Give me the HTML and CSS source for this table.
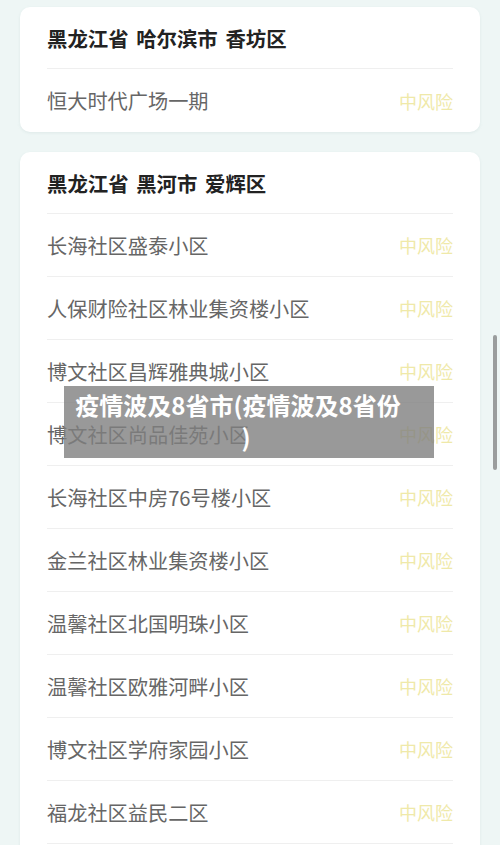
FILE: index.html
```html
<!DOCTYPE html>
<html lang="zh-CN">
<head>
<meta charset="utf-8">
<title>风险地区</title>
<link rel="stylesheet" href="styles.css">
</head>
<body>
<main class="page">
  <section class="card">
    <h2 class="card-title">黑龙江省 哈尔滨市 香坊区</h2>
    <div class="row"><span class="name">恒大时代广场一期</span><span class="risk">中风险</span></div>
  </section>
  <section class="card">
    <h2 class="card-title">黑龙江省 黑河市 爱辉区</h2>
    <div class="row"><span class="name">长海社区盛泰小区</span><span class="risk">中风险</span></div>
    <div class="row"><span class="name">人保财险社区林业集资楼小区</span><span class="risk">中风险</span></div>
    <div class="row"><span class="name">博文社区昌辉雅典城小区</span><span class="risk">中风险</span></div>
    <div class="row"><span class="name">博文社区尚品佳苑小区</span><span class="risk">中风险</span></div>
    <div class="row"><span class="name">长海社区中房76号楼小区</span><span class="risk">中风险</span></div>
    <div class="row"><span class="name">金兰社区林业集资楼小区</span><span class="risk">中风险</span></div>
    <div class="row"><span class="name">温馨社区北国明珠小区</span><span class="risk">中风险</span></div>
    <div class="row"><span class="name">温馨社区欧雅河畔小区</span><span class="risk">中风险</span></div>
    <div class="row"><span class="name">博文社区学府家园小区</span><span class="risk">中风险</span></div>
    <div class="row"><span class="name">福龙社区益民二区</span><span class="risk">中风险</span></div>
    <div class="row row-end"></div>
  </section>
</main>
<div class="caption">疫情波及8省市(疫情波及8省份<br><span class="caption-tail">)</span></div>
<div class="scrollbar"></div>
</body>
</html>
```

FILE: styles.css
```css
html, body {
  margin: 0;
  padding: 0;
}
body {
  background: #eef6f5;
  font-family: "Noto Sans CJK SC", "Noto Sans", sans-serif;
  overflow: hidden;
  height: 845px;
}
.page {
  padding: 7px 20px 0;
  display: flex;
  flex-direction: column;
  gap: 20px;
}
.card {
  background: #ffffff;
  border-radius: 10px;
  padding: 0 27px;
  box-shadow: 0 1px 3px rgba(150, 175, 175, 0.18);
}
.card-title {
  margin: 0;
  height: 61px;
  display: flex;
  align-items: center;
  font-size: 20.4px;
  font-weight: 700;
  color: #222;
  word-spacing: 3px;
}
.row {
  border-top: 1px solid #efefef;
  height: 62px;
  display: flex;
  align-items: center;
  justify-content: space-between;
}
.card:first-child .row {
  height: 63px;
}
.name {
  font-size: 20.2px;
  color: #666;
}
.risk {
  font-size: 18px;
  color: #efe9a9;
}
.row-end {
  height: 40px;
}
.caption {
  position: absolute;
  left: 64px;
  top: 386px;
  width: 370px;
  height: 72px;
  box-sizing: border-box;
  padding: 3px 22px 5px 0;
  background: rgba(128, 128, 128, 0.8);
  color: #fff;
  font-size: 24px;
  font-weight: 700;
  line-height: 32px;
  text-align: center;
}
.caption-tail {
  padding-left: 16px;
}
.scrollbar {
  position: absolute;
  left: 493px;
  top: 335px;
  width: 4px;
  height: 135px;
  border-radius: 2px;
  background: #9a9d9d;
}
```
